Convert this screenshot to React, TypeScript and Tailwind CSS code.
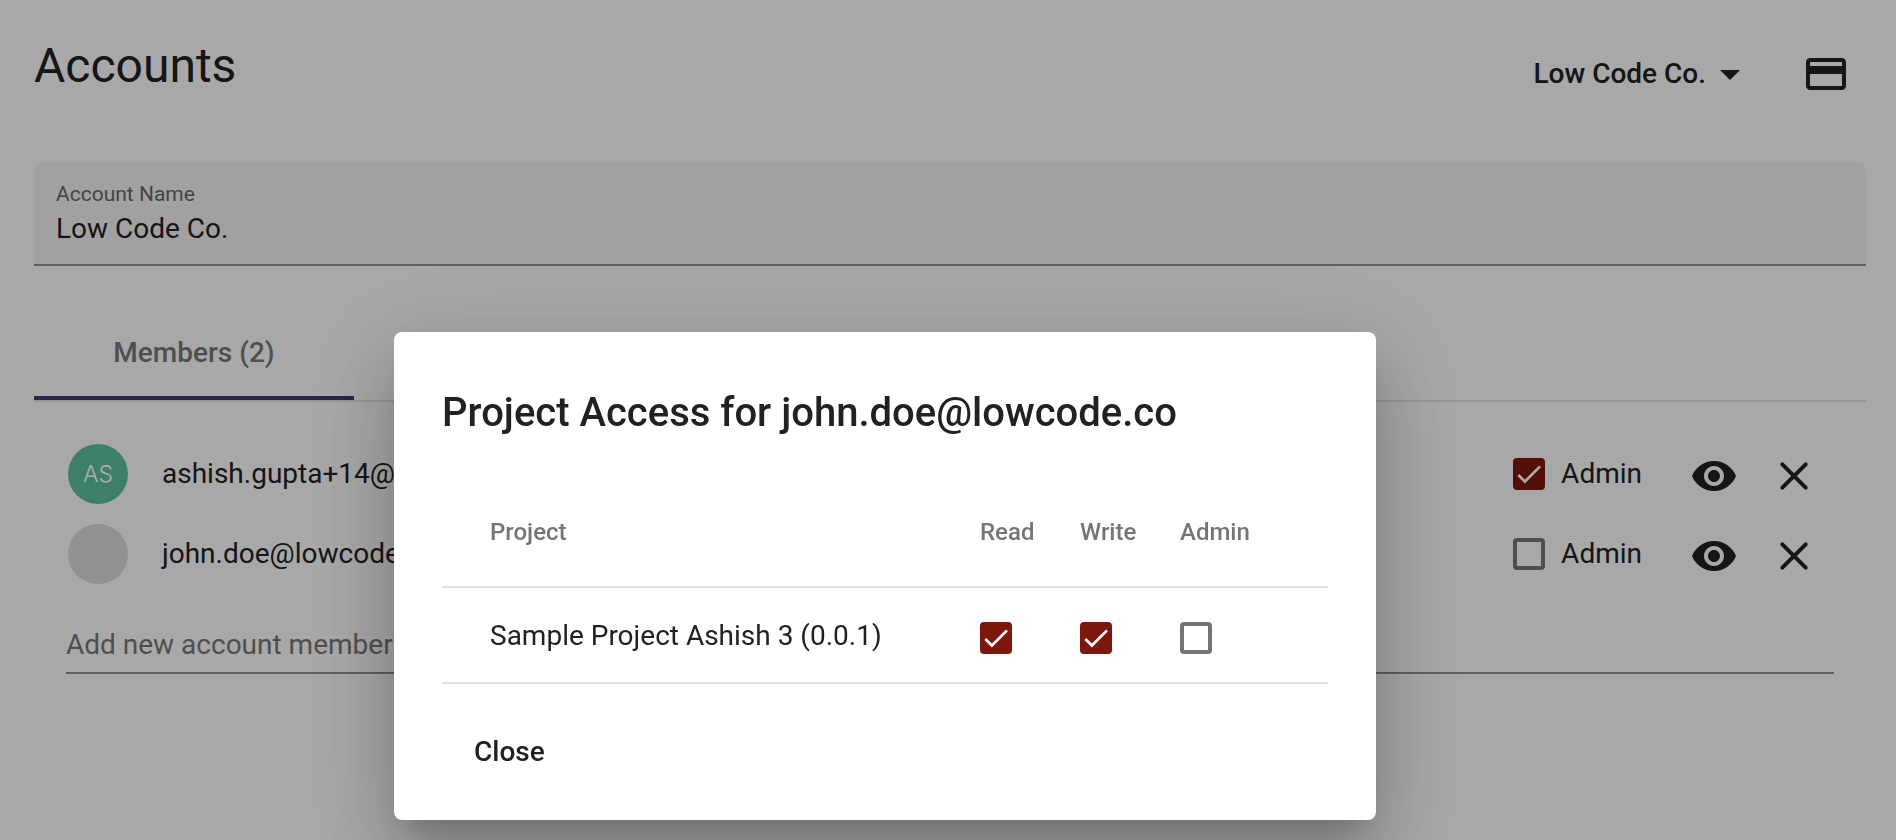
import type React from "react"
import { useId, useState } from "react"
import { MdArrowDropDown, MdCreditCard, MdVisibility } from "react-icons/md"

interface Member {
  email: string
  initials: string
  avatarClass: string
  admin: boolean
}

interface Project {
  name: string
  read: boolean
  write: boolean
  admin: boolean
}

const members: Member[] = [
  { email: "ashish.gupta+14@lowcode.co", initials: "AS", avatarClass: "bg-[#5cbc9f]", admin: true },
  { email: "john.doe@lowcode.co", initials: "", avatarClass: "bg-[#d6d6d6]", admin: false },
]

const projects: Project[] = [{ name: "Sample Project Ashish 3 (0.0.1)", read: true, write: true, admin: false }]

interface CheckboxProps {
  initial: boolean
  label: string
  showLabel?: boolean
}

const Checkbox: React.FC<CheckboxProps> = ({ initial, label, showLabel }) => {
  const [checked, setChecked] = useState(initial)
  const id = useId()

  return (
    <div className="flex items-center gap-4">
      <span className="relative flex size-8 shrink-0">
        <input
          id={id}
          type="checkbox"
          checked={checked}
          onChange={() => setChecked(!checked)}
          aria-label={label}
          className="h-full w-full appearance-none rounded-[4px] border-4 border-[#757575] checked:border-[#7d160d] checked:bg-[#7d160d]"
        />
        {checked && (
          <svg
            viewBox="0 0 32 32"
            className="pointer-events-none absolute inset-0 h-full w-full"
            fill="none"
            stroke="#fafafa"
            strokeWidth="2.7"
          >
            <path d="M5.3 17L11.9 23.5L27 8.4" />
          </svg>
        )}
      </span>
      {showLabel && <label htmlFor={id}>{label}</label>}
    </div>
  )
}

const CloseIcon: React.FC = () => {
  return (
    <svg viewBox="0 0 48 48" className="size-12" fill="none" stroke="currentColor" strokeWidth="4" strokeLinecap="round">
      <path d="M12.3 12.3L35.7 35.7M35.7 12.3L12.3 35.7" />
    </svg>
  )
}

const MemberRow: React.FC<{ member: Member }> = ({ member }) => {
  return (
    <li className="flex h-20 items-center">
      <span
        className={`flex size-[60px] items-center justify-center rounded-full font-[Inter,sans-serif] text-[23px] font-light text-white ${member.avatarClass}`}
      >
        {member.initials}
      </span>
      <span className="ml-[34px] flex-1">{member.email}</span>
      <Checkbox initial={member.admin} label="Admin" showLabel />
      <div className="ml-12 flex gap-8 pt-1">
        <button type="button" aria-label={`View projects of ${member.email}`}>
          <MdVisibility size={48} />
        </button>
        <button type="button" aria-label={`Remove ${member.email}`}>
          <CloseIcon />
        </button>
      </div>
    </li>
  )
}

const AccessDialog: React.FC<{ onClose: () => void }> = ({ onClose }) => {
  return (
    <div className="fixed inset-0 flex items-start justify-center bg-black/[.32] pt-[332px] pr-[126px]">
      <div
        role="dialog"
        aria-labelledby="access-title"
        className="w-[982px] rounded-lg bg-white px-12 pt-14 pb-8 shadow-[0_22px_30px_-14px_rgba(0,0,0,0.2),0_48px_76px_6px_rgba(0,0,0,0.14),0_18px_92px_16px_rgba(0,0,0,0.12)]"
      >
        <h2 id="access-title" className="pb-[37px] text-[40px] leading-[50px] font-medium">
          Project Access for john.doe@lowcode.co
        </h2>
        <table className="w-full table-fixed text-left">
          <thead>
            <tr className="h-28 border-b-2 border-[#e0e0e0] text-2xl text-[#757575]">
              <th className="pt-0.5 pl-12 font-medium">Project</th>
              <th className="w-[100px] pt-0.5 font-medium">Read</th>
              <th className="w-[100px] pt-0.5 font-medium">Write</th>
              <th className="w-[148px] pt-0.5 font-medium">Admin</th>
            </tr>
          </thead>
          <tbody>
            {projects.map((project) => (
              <tr key={project.name} className="h-24 border-b-2 border-[#e0e0e0]">
                <td className="pt-0.5 pl-12">{project.name}</td>
                <td className="pt-1.5">
                  <Checkbox initial={project.read} label="Read" />
                </td>
                <td className="pt-1.5">
                  <Checkbox initial={project.write} label="Write" />
                </td>
                <td className="pt-1.5">
                  <Checkbox initial={project.admin} label="Admin" />
                </td>
              </tr>
            ))}
          </tbody>
        </table>
        <button type="button" onClick={onClose} className="mt-8 h-[72px] px-8 font-medium">
          Close
        </button>
      </div>
    </div>
  )
}

const App: React.FC = () => {
  const [dialogOpen, setDialogOpen] = useState(true)

  return (
    <div className="min-h-screen bg-[#f8f8f8] pr-[30px] pl-[34px] font-[Roboto,sans-serif] text-[28px] leading-[34px] text-[#212121]">
      {/* Header */}
      <header className="flex items-start justify-between">
        <h1 className="pt-[37px] text-[48px] leading-[58px]">Accounts</h1>
        <div className="flex items-center pt-[50px] pr-4">
          <button type="button" className="flex h-12 items-center font-medium">
            Low Code Co.
            <MdArrowDropDown size={48} />
          </button>
          <button type="button" aria-label="Billing" className="ml-12">
            <MdCreditCard size={48} />
          </button>
        </div>
      </header>

      {/* Account name */}
      <div className="mt-16 flex h-[104px] flex-col rounded-t-lg border-b-2 border-[#8c8c8c] bg-[#eeeeee] px-[22px] pt-[18px]">
        <label htmlFor="account-name" className="text-[21px] leading-7 text-[#666666]">
          Account Name
        </label>
        <input id="account-name" type="text" defaultValue="Low Code Co." className="mt-1 h-[34px] w-full outline-none" />
      </div>

      {/* Tabs */}
      <div className="mt-[38px] flex border-b-2 border-[#dcdcdc]">
        <button type="button" className="h-24 w-80 border-b-4 border-[#353b6e] pt-1.5 font-medium text-[#757575]">
          Members (2)
        </button>
      </div>

      {/* Members */}
      <ul className="mt-8 pr-12 pl-[34px]">
        {members.map((member) => (
          <MemberRow key={member.email} member={member} />
        ))}
      </ul>
      <div className="mt-6 mr-8 ml-8 h-[56px] border-b-2 border-[#8c8c8c]">
        <input
          type="email"
          aria-label="Add new account member"
          placeholder="Add new account member"
          className="h-[52px] w-full outline-none placeholder:text-[#757575] placeholder:opacity-100"
        />
      </div>

      {dialogOpen && <AccessDialog onClose={() => setDialogOpen(false)} />}
    </div>
  )
}

export default App
